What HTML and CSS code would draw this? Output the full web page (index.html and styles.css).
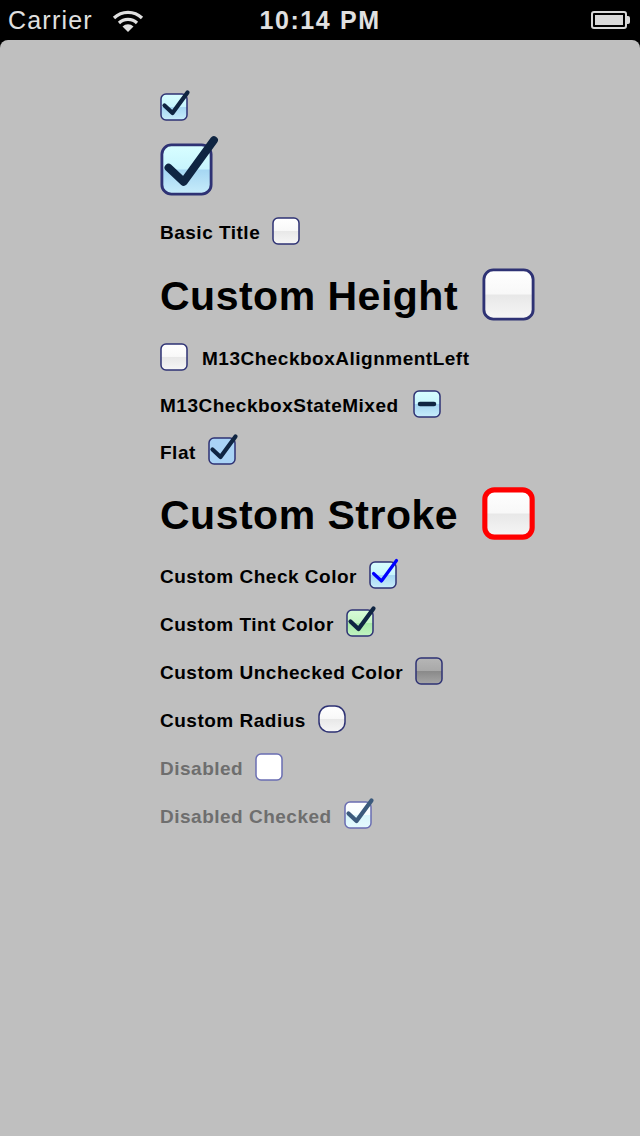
FILE: index.html
```html
<!DOCTYPE html>
<html>
<head>
<meta charset="utf-8">
<link rel="stylesheet" href="styles.css">
</head>
<body>
<svg class="defs" width="0" height="0" aria-hidden="true">
  <defs>
    <linearGradient id="gChecked" x1="0" y1="0" x2="0" y2="1">
      <stop offset="0" stop-color="#d8feff"/>
      <stop offset="0.48" stop-color="#c8f5fd"/>
      <stop offset="0.52" stop-color="#a6d7f3"/>
      <stop offset="1" stop-color="#c8edfb"/>
    </linearGradient>
    <linearGradient id="gUnchecked" x1="0" y1="0" x2="0" y2="1">
      <stop offset="0" stop-color="#ffffff"/>
      <stop offset="0.48" stop-color="#f8f8f8"/>
      <stop offset="0.52" stop-color="#e8e8e8"/>
      <stop offset="1" stop-color="#f6f6f6"/>
    </linearGradient>
    <linearGradient id="gTint" x1="0" y1="0" x2="0" y2="1">
      <stop offset="0" stop-color="#d8fcd8"/>
      <stop offset="0.48" stop-color="#c6f5c6"/>
      <stop offset="0.52" stop-color="#a8eaa8"/>
      <stop offset="1" stop-color="#c2f4c2"/>
    </linearGradient>
    <linearGradient id="gGray" x1="0" y1="0" x2="0" y2="1">
      <stop offset="0" stop-color="#b6b6b6"/>
      <stop offset="0.48" stop-color="#a9a9a9"/>
      <stop offset="0.52" stop-color="#8a8a8a"/>
      <stop offset="1" stop-color="#a6a6a6"/>
    </linearGradient>
    <linearGradient id="gDisChecked" x1="0" y1="0" x2="0" y2="1">
      <stop offset="0" stop-color="#ffffff"/>
      <stop offset="0.48" stop-color="#f6fdff"/>
      <stop offset="0.52" stop-color="#d9f6fc"/>
      <stop offset="1" stop-color="#e6fafe"/>
    </linearGradient>
  </defs>
</svg>

<div class="statusbar">
  <div class="sb-left">
    <span class="carrier">Carrier</span>
    <svg class="wifi" width="32" height="24" viewBox="0 0 32 24">
      <path d="M2 9 A20 20 0 0 1 30 9" fill="none" stroke="#e0e0e0" stroke-width="3.2"/>
      <path d="M7 14 A13 13 0 0 1 25 14" fill="none" stroke="#e0e0e0" stroke-width="3.2"/>
      <path d="M16 23 L10.5 17.5 A8 8 0 0 1 21.5 17.5 Z" fill="#e0e0e0"/>
    </svg>
  </div>
  <div class="time">10:14 PM</div>
  <div class="battery">
    <div class="batt-body"><div class="batt-fill"></div></div>
    <div class="batt-nub"></div>
  </div>
</div>

<main class="screen">
  <div class="list">
    <div class="row r-small">
      <svg class="cb cb-s" viewBox="0 0 28 28"><rect x="1" y="1" width="26" height="26" rx="5" class="box" fill="url(#gChecked)"/><path class="check" d="M4.5 12.5 L12.5 20 L27.5 -0.5"/></svg>
    </div>
    <div class="row r-big">
      <svg class="cb cb-l" viewBox="0 0 28 28"><rect x="1" y="1" width="26" height="26" rx="5" class="box" fill="url(#gChecked)"/><path class="check" d="M4.5 13 L12.5 20.5 L28.5 -1.5"/></svg>
    </div>
    <div class="row r-small">
      <span class="label">Basic Title</span>
      <svg class="cb cb-s" viewBox="0 0 28 28"><rect x="1" y="1" width="26" height="26" rx="5" class="box" fill="url(#gUnchecked)"/></svg>
    </div>
    <div class="row r-large">
      <span class="label label-big">Custom Height</span>
      <svg class="cb cb-l" viewBox="0 0 28 28"><rect x="1" y="1" width="26" height="26" rx="5" class="box" fill="url(#gUnchecked)"/></svg>
    </div>
    <div class="row r-small r-left">
      <svg class="cb cb-s" viewBox="0 0 28 28"><rect x="1" y="1" width="26" height="26" rx="5" class="box" fill="url(#gUnchecked)"/></svg>
      <span class="label">M13CheckboxAlignmentLeft</span>
    </div>
    <div class="row r-mid">
      <span class="label">M13CheckboxStateMixed</span>
      <svg class="cb cb-s" viewBox="0 0 28 28"><rect x="1" y="1" width="26" height="26" rx="5" class="box" fill="url(#gChecked)"/><path class="dash" d="M7 14 L21 14"/></svg>
    </div>
    <div class="row r-small">
      <span class="label">Flat</span>
      <svg class="cb cb-s" viewBox="0 0 28 28"><rect x="1" y="1" width="26" height="26" rx="5" class="box" fill="#a9d3f6"/><path class="check" d="M4.5 12.5 L12.5 20 L27.5 -0.5"/></svg>
    </div>
    <div class="row r-big">
      <span class="label label-big">Custom Stroke</span>
      <svg class="cb cb-l" viewBox="0 0 28 28"><rect x="1.5" y="1.5" width="25" height="25" rx="5" class="box box-red" fill="url(#gUnchecked)"/></svg>
    </div>
    <div class="row r-small">
      <span class="label">Custom Check Color</span>
      <svg class="cb cb-s" viewBox="0 0 28 28"><rect x="1" y="1" width="26" height="26" rx="5" class="box" fill="url(#gChecked)"/><path class="check check-blue" d="M4.5 12.5 L12.5 20 L27.5 -0.5"/></svg>
    </div>
    <div class="row r-small">
      <span class="label">Custom Tint Color</span>
      <svg class="cb cb-s" viewBox="0 0 28 28"><rect x="1" y="1" width="26" height="26" rx="5" class="box" fill="url(#gTint)"/><path class="check" d="M4.5 12.5 L12.5 20 L27.5 -0.5"/></svg>
    </div>
    <div class="row r-small">
      <span class="label">Custom Unchecked Color</span>
      <svg class="cb cb-s" viewBox="0 0 28 28"><rect x="1" y="1" width="26" height="26" rx="5" class="box" fill="url(#gGray)"/></svg>
    </div>
    <div class="row r-small">
      <span class="label">Custom Radius</span>
      <svg class="cb cb-s" viewBox="0 0 28 28"><rect x="1" y="1" width="26" height="26" rx="10" class="box" fill="url(#gUnchecked)"/></svg>
    </div>
    <div class="row r-small">
      <span class="label label-dis">Disabled</span>
      <svg class="cb cb-s" viewBox="0 0 28 28"><rect x="1" y="1" width="26" height="26" rx="5" class="box box-dis" fill="#ffffff"/></svg>
    </div>
    <div class="row r-small">
      <span class="label label-dis">Disabled Checked</span>
      <svg class="cb cb-s" viewBox="0 0 28 28"><rect x="1" y="1" width="26" height="26" rx="5" class="box box-dis" fill="url(#gDisChecked)"/><path class="check check-dis" d="M4.5 12.5 L12.5 20 L27.5 -0.5"/></svg>
    </div>
  </div>
</main>
</body>
</html>
```

FILE: styles.css
```css
* { box-sizing: border-box; }
html, body {
  margin: 0;
  padding: 0;
  width: 640px;
  height: 1136px;
  background: #000;
  overflow: hidden;
  font-family: "Liberation Sans", Arial, Helvetica, sans-serif;
}
.defs { position: absolute; width: 0; height: 0; }

.statusbar {
  height: 40px;
  background: #000;
  display: flex;
  align-items: center;
  justify-content: space-between;
  padding: 0 8px 0 8px;
  color: #e0e0e0;
  position: relative;
}
.sb-left { display: flex; align-items: center; gap: 19px; }
.carrier { font-size: 25px; letter-spacing: 1.2px; }
.wifi { display: block; margin-top: 2px; }
.time {
  position: absolute;
  left: 0;
  right: 0;
  text-align: center;
  font-size: 25px;
  font-weight: bold;
  letter-spacing: 1.6px;
  pointer-events: none;
}
.battery { display: flex; align-items: center; margin-right: 2px; }
.batt-body {
  width: 36px;
  height: 18px;
  border: 2px solid #d8d8d8;
  border-radius: 3px;
  padding: 2px;
}
.batt-fill { width: 100%; height: 100%; background: #d8d8d8; }
.batt-nub { width: 3px; height: 8px; background: #d8d8d8; border-radius: 0 2px 2px 0; }

.screen {
  height: 1096px;
  background: #bfbfbf;
  border-radius: 8px 8px 0 0;
  padding: 53px 0 0 160px;
}
.list { display: flex; flex-direction: column; gap: 20px; }
.row { display: flex; align-items: center; gap: 12px; }
.r-small { height: 28px; }
.r-mid { height: 26px; gap: 14px; }
.r-big { height: 56px; gap: 24px; }
.r-large { height: 58px; gap: 24px; }
.r-left { gap: 14px; }

.label {
  font-size: 19px;
  font-weight: bold;
  letter-spacing: 0.5px;
  color: #000;
  white-space: nowrap;
  padding-top: 3px;
}
.label-big { font-size: 41px; letter-spacing: 0.5px; padding-top: 4px; }
.label-dis { color: #6e6e6e; }

.cb { display: block; overflow: visible; flex: none; }
.cb-s { width: 28px; height: 28px; }
.cb-l { width: 53px; height: 53px; }
.box { stroke: #2e3274; stroke-width: 1.5; }
.box-red { stroke: #ff0000; stroke-width: 2.7; }
.box-dis { stroke: #6a6eb2; }
.check {
  fill: none;
  stroke: #0f2542;
  stroke-width: 4.2;
  stroke-linecap: round;
  stroke-linejoin: round;
}
.check-blue { stroke: #0000ff; stroke-width: 3.2; }
.check-dis { stroke: #3c5a7c; }
.dash {
  fill: none;
  stroke: #0f2542;
  stroke-width: 4.5;
  stroke-linecap: round;
}
```
